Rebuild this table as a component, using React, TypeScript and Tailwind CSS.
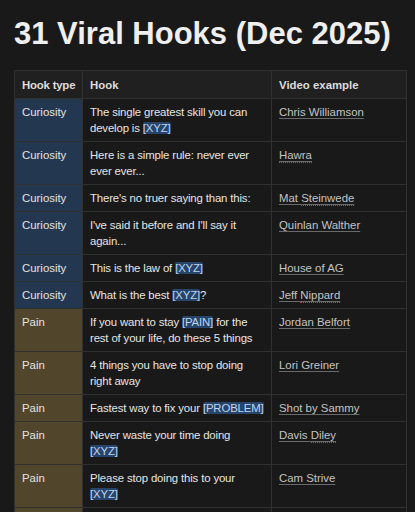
import React from "react";

type Piece = string | { tag: string } | { br: true };

type Row = {
  type: "Curiosity" | "Pain";
  hook: Piece[];
  video: (string | { typo: string })[];
};

const rows: Row[] = [
  { type: "Curiosity", hook: ["The single greatest skill you can develop is ", { tag: "[XYZ]" }], video: ["Chris Williamson"] },
  { type: "Curiosity", hook: ["Here is a simple rule: never ever ever ever..."], video: [{ typo: "Hawra" }] },
  { type: "Curiosity", hook: ["There's no truer saying than this:"], video: ["Mat ", { typo: "Steinwede" }] },
  { type: "Curiosity", hook: ["I've said it before and I'll say it again..."], video: ["Quinlan Walther"] },
  { type: "Curiosity", hook: ["This is the law of ", { tag: "[XYZ]" }], video: ["House of AG"] },
  { type: "Curiosity", hook: ["What is the best ", { tag: "[XYZ]" }, "?"], video: ["Jeff ", { typo: "Nippard" }] },
  { type: "Pain", hook: ["If you want to stay ", { tag: "[PAIN]" }, " for the rest of your life, do these 5 things"], video: ["Jordan Belfort"] },
  { type: "Pain", hook: ["4 things you have to stop doing right away"], video: ["Lori Greiner"] },
  { type: "Pain", hook: ["Fastest way to fix your ", { tag: "[PROBLEM]" }], video: ["Shot by Sammy"] },
  { type: "Pain", hook: ["Never waste your time doing", { br: true }, { tag: "[XYZ]" }], video: ["Davis ", { typo: "Diley" }] },
  { type: "Pain", hook: ["Please stop doing this to your", { br: true }, { tag: "[XYZ]" }], video: ["Cam Strive"] },
  { type: "Pain", hook: ["Stop making this mistake with ", { tag: "[XYZ]" }], video: ["Alex Hormozi"] },
];

const cell = "border border-[#303030] px-[7px] align-top";

function Hook({ parts }: { parts: Piece[] }) {
  return (
    <>
      {parts.map((h, j) => {
        if (typeof h === "string") return <span key={j}>{h}</span>;
        if ("br" in h) return <br key={j} />;
        return (
          <span key={j} className="bg-[#27446a] text-[#bcd5f2] rounded-[2px]">
            {h.tag}
          </span>
        );
      })}
    </>
  );
}

export default function App() {
  return (
    <div
      className="h-screen overflow-hidden bg-[#191919] text-[#e6e6e6] px-[14px] pt-[14px]"
      style={{ fontFamily: '"Liberation Sans", Arial, sans-serif' }}
    >
      <h1 className="text-[31px] leading-[40px] font-bold text-[#efefef]">
        31 Viral Hooks (Dec 2025)
      </h1>
      <table className="mt-[16px] border-collapse table-fixed w-[392px] text-[11.4px] leading-[16px]">
        <colgroup>
          <col className="w-[68px]" />
          <col className="w-[189px]" />
          <col className="w-[135px]" />
        </colgroup>
        <thead>
          <tr className="bg-[#202020]">
            <th className={cell + " pt-[6px] pb-[5px] text-left font-bold text-[#dcdcdc] whitespace-nowrap tracking-[-0.2px]"}>Hook type</th>
            <th className={cell + " pt-[6px] pb-[5px] text-left font-bold text-[#dcdcdc]"}>Hook</th>
            <th className={cell + " pt-[6px] pb-[5px] text-left font-bold text-[#dcdcdc]"}>Video example</th>
          </tr>
        </thead>
        <tbody>
          {rows.map((r, i) => (
            <tr key={i}>
              <td
                className={
                  cell +
                  " pt-[5px] pb-[5px] text-[#e3e3e3] " +
                  (r.type === "Curiosity" ? "bg-[#233750]" : "bg-[#51462b]")
                }
              >
                {r.type}
              </td>
              <td className={cell + " pt-[5px] pb-[5px] pr-[5px] text-[#e6e6e6] tracking-[-0.15px]"}>
                <Hook parts={r.hook} />
              </td>
              <td className={cell + " pt-[5px] pb-[5px]"}>
                <span className="text-[#c4c4c4] underline decoration-[#6a6a6a] underline-offset-[2px]">
                  {r.video.map((v, j) =>
                    typeof v === "string" ? (
                      <span key={j}>{v}</span>
                    ) : (
                      <span key={j} className="border-b border-dotted border-[#d23c3c] pb-[1px]">
                        {v.typo}
                      </span>
                    )
                  )}
                </span>
              </td>
            </tr>
          ))}
        </tbody>
      </table>
    </div>
  );
}
